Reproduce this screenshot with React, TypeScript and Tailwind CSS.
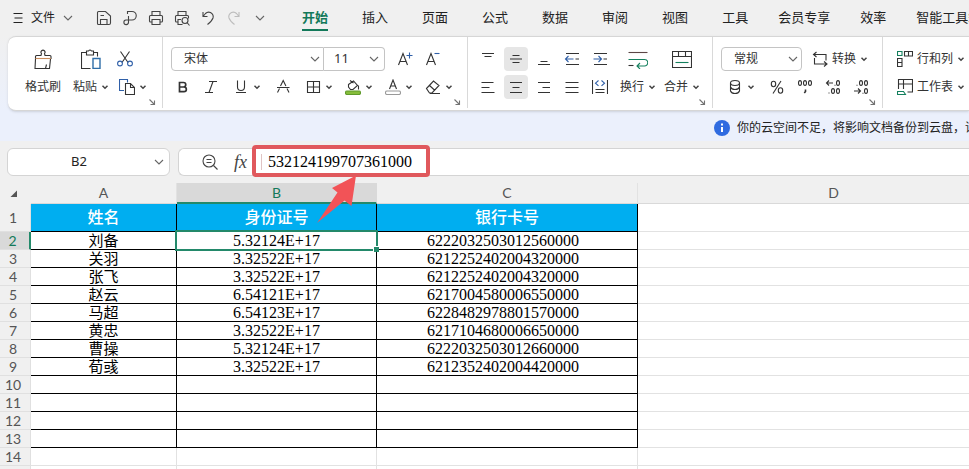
import type { ReactNode } from "react";
import clsx from "clsx";

type IconProps = {
  size?: number;
  children: ReactNode;
};

// All glyphs are drawn on a pixel grid: one unit is one pixel.
function Icon({ size = 16, children }: IconProps) {
  return (
    <svg
      width={size}
      height={size}
      viewBox={`0 0 ${size} ${size}`}
      fill="none"
      stroke="currentColor"
      strokeWidth="1.1"
      className="shrink-0"
      aria-hidden="true"
    >
      {children}
    </svg>
  );
}

function Caret() {
  return (
    <svg width="8" height="8" viewBox="0 0 8 8" fill="none" stroke="#444" strokeWidth="1.5" className="shrink-0" aria-hidden="true">
      <path d="M1.5 2.8 4 5.2l2.5-2.4" />
    </svg>
  );
}

function Chevron({ className }: { className?: string }) {
  return (
    <svg width="10" height="10" viewBox="0 0 10 10" fill="none" stroke="#666" strokeWidth="1.1" className={clsx("pointer-events-none shrink-0", className)} aria-hidden="true">
      <path d="M1 3l4 4 4-4" />
    </svg>
  );
}

function Launcher() {
  return (
    <button type="button" aria-label="更多设置" className="absolute right-1.5 bottom-0.5 text-neutral-500">
      <Icon size={8}>
        <path d="M1.5 1.5l5 5M6.5 2.5v4h-4" />
      </Icon>
    </button>
  );
}

type ToolProps = {
  label: string;
  caret?: boolean;
  active?: boolean;
  children: ReactNode;
};

function Tool({ label, caret, active, children }: ToolProps) {
  if (caret) {
    return (
      <button type="button" aria-label={label} className="flex h-7 w-10 items-center gap-1 pl-2">
        {children}
        <Caret />
      </button>
    );
  }
  return (
    <button type="button" aria-label={label} className="flex size-7 items-center justify-center">
      <span className={clsx("flex size-6 items-center justify-center rounded", active && "bg-[#e6e6e6]")}>{children}</span>
    </button>
  );
}

type BigToolProps = {
  label: string;
  caret?: boolean;
  children: ReactNode;
};

function BigTool({ label, caret, children }: BigToolProps) {
  return (
    <button type="button" className="flex w-11 flex-col items-center">
      <span className="flex h-7 items-center">{children}</span>
      <span className="flex h-7 items-center gap-1">
        {label}
        {caret && <Caret />}
      </span>
    </button>
  );
}

const quickAccess = [
  {
    label: "保存",
    icon: (
      <path d="M2.500 1.500h7l5 4.500v7q0 1.500-1.500 1.500h-10.500q-1 0-1-1v-11q0-1 1-1zM4.500 14.500v-5h6.500v5M4.500 5.500h3.500" />
    ),
  },
  {
    label: "输出为PDF",
    icon: <path d="M5.500 4v-2.500h4.500a4.200 4.200 0 0 1 0 8.500h-6a2.300 2.300 0 1 0 2.500 2.300v-6.300" />,
  },
  {
    label: "打印",
    icon: (
      <path d="M4 5.500v-4h8v4M4 12h-1.500q-1 0-1-1v-4.500q0-1 1-1h11q1 0 1 1v4.500q0 1-1 1h-1.500M4 9.500h8v5h-8z" />
    ),
  },
  {
    label: "打印预览",
    icon: (
      <>
        <path d="M4 5.500v-4h8v4M4 12h-1.500q-1 0-1-1v-4.500q0-1 1-1h11q1 0 1 1v2M7 9.500h-3v5h4.500" />
        <circle cx="11" cy="10.500" r="3" />
        <path d="M13 12.500l2.500 3" />
      </>
    ),
  },
  {
    label: "撤销",
    icon: <path d="M3 2v4.500h4.500M3 6.500l2.500-3q2-2 5-1 3.500 2 2.500 5.500-1 3-5.500 6.500" />,
  },
  {
    label: "恢复",
    faded: true,
    icon: <path d="M13 2v4.500h-4.500M13 6.500l-2.500-3q-2-2-5-1-3.500 2-2.500 5.500 1 3 5.500 6.500" />,
  },
];

const tabs = ["开始", "插入", "页面", "公式", "数据", "审阅", "视图", "工具"];
const extraTabs = ["会员专享", "效率", "智能工具箱"];

function TopBar() {
  return (
    <header className="flex h-9 items-center">
      <button type="button" className="flex items-center gap-2 pl-[13px] text-xs">
        <Icon size={10}>
          <path d="M0.500 0.500h9M1.500 5h8M0.500 9.500h9" />
        </Icon>
        文件
        <Chevron />
      </button>
      <span className="ml-3 h-4 w-px bg-[#d0d0d0]" />
      <div className="ml-1.5 flex">
        {quickAccess.map((item) => (
          <button
            key={item.label}
            type="button"
            aria-label={item.label}
            className={clsx("flex w-[26px] justify-center", item.faded ? "text-[#bdbdbd]" : "text-[#444]")}
          >
            <Icon>{item.icon}</Icon>
          </button>
        ))}
        <button type="button" aria-label="更多" className="flex w-[26px] items-center justify-center">
          <Chevron />
        </button>
      </div>
      <span className="ml-2 h-4 w-px bg-[#d0d0d0]" />
      <nav className="ml-[21px] flex gap-[34px] text-[13px]">
        {tabs.map((tab, i) => (
          <button key={tab} type="button" className={clsx("relative h-9", i === 0 && "font-bold text-[#13795a]")}>
            {tab}
            {i === 0 && <span className="absolute inset-x-0 bottom-[5px] h-0.5 bg-[#13795a]" />}
          </button>
        ))}
      </nav>
      <nav className="ml-[30px] flex gap-[30px] text-[13px]">
        {extraTabs.map((tab) => (
          <button key={tab} type="button">
            {tab}
          </button>
        ))}
      </nav>
    </header>
  );
}

function ClipboardGroup() {
  return (
    <section className="relative flex w-[154px] pt-2 pl-[13px]">
      <BigTool label="格式刷">
        <Icon size={20}>
          <path d="M2.500 10v-2.500q0-1 1-1h4.500l0.500-2a2 2 0 1 1 3 0l0.500 2h5q1 0 1 1v2.500M2.500 10l-0.500 9.500h14.500l1-9.500M12.500 19.500l1-4" />
          <path d="M2.500 9.500h15.500" stroke="#c98d5e" />
        </Icon>
      </BigTool>
      <div className="ml-1">
        <BigTool label="粘贴" caret>
          <Icon size={20}>
            <path d="M5 3.500h-4.500v16h9M13 3.500h3.500v4M5.500 2v4h7v-4h-2q-1.500-2-3 0z" />
            <path d="M12 9.500h7v10h-7z" stroke="#2f6ea8" strokeWidth="1.400" />
          </Icon>
        </BigTool>
      </div>
      <div className="-ml-0.5">
        <button type="button" aria-label="剪切" className="flex h-7 items-center pl-1.5">
          <Icon>
            <path d="M3.500 0.500l7.500 11M12.500 0.500l-7.500 11" />
            <circle cx="3" cy="12.500" r="2.400" stroke="#2f5fa8" />
            <circle cx="13" cy="12.500" r="2.400" stroke="#2f5fa8" />
          </Icon>
        </button>
        <Tool label="复制" caret>
          <Icon>
            <path d="M5 11.500h-4.500v-11h8v3" stroke="#2f5fa8" />
            <path d="M6.500 4.500h5l4 4v7h-9zM11.500 4.500v4h4" />
          </Icon>
        </Tool>
      </div>
      <Launcher />
    </section>
  );
}

function FontGroup() {
  return (
    <section className="relative w-[305px] border-l border-[#d9d9d9] pt-2 pl-1.5">
      <div className="flex h-7 items-center pl-0.5">
        <div className="relative h-6 w-[153px]">
          <select aria-label="字体" className="h-6 w-full appearance-none rounded-l border border-[#c4c4c4] bg-white pl-3 text-xs">
            <option>宋体</option>
          </select>
          <Chevron className="absolute top-[7px] right-1" />
        </div>
        <div className="relative h-6 w-[61px]">
          <select aria-label="字号" className="h-6 w-full appearance-none rounded-r border border-l-0 border-[#c4c4c4] bg-white pl-2.5 text-[13px]">
            <option>11</option>
          </select>
          <Chevron className="absolute top-[7px] right-1.5" />
        </div>
        <div className="ml-1.5 flex">
          <Tool label="增大字号">
            <Icon>
              <path d="M1.500 14l4.500-11.500 4.500 11.500M3 10.500h6" />
              <path d="M9.500 4.500h6M12.500 1.500v6" stroke="#2f5fa8" />
            </Icon>
          </Tool>
          <Tool label="减小字号">
            <Icon>
              <path d="M1.500 14l4.500-11.500 4.500 11.500M3 10.500h6" />
              <path d="M9.500 2.500h5" stroke="#2f5fa8" />
            </Icon>
          </Tool>
        </div>
      </div>
      <div className="flex">
        <Tool label="加粗">
          <Icon>
            <path d="M4.500 3.500h4a2.200 2.200 0 0 1 0 4.500h-4zM4.500 8h4.500a2.300 2.300 0 0 1 0 4.700h-4.500z" strokeWidth="1.700" />
          </Icon>
        </Tool>
        <Tool label="倾斜">
          <Icon>
            <path d="M6 2.500h8M2 13.500h8M10 2.500l-4 11" />
          </Icon>
        </Tool>
        <Tool label="下划线" caret>
          <Icon>
            <path d="M4.500 1.500v6.500a3.500 3.500 0 0 0 7 0v-6.500M3 13.500h10" />
          </Icon>
        </Tool>
        <div className="ml-1">
          <Tool label="删除线">
            <Icon>
              <path d="M2 8.500h12.500M5.500 7l2.700-5.500 2.700 5.500M4.500 9.500l-2 4M12 9.500l2 4" />
            </Icon>
          </Tool>
        </div>
        <Tool label="边框" caret>
          <Icon>
            <path d="M2.500 2.500h12v11h-12zM8.500 2.500v11M2.500 8h12" />
          </Icon>
        </Tool>
        <Tool label="填充颜色" caret>
          <Icon>
            <path d="M3.500 5.500l5-3.500 4 4.500-4.500 4h-2.500l-2-2.500zM5 1.500l3.500 2.500M13.500 6.500v4" />
            <rect x="0.500" y="12" width="15" height="3.500" rx="1.500" fill="#86bd3a" stroke="#5f9a2a" />
          </Icon>
        </Tool>
        <Tool label="字体颜色" caret>
          <Icon>
            <path d="M4.500 10l3.500-9 3.500 9M5.500 7h5" />
            <rect x="0.500" y="12" width="15" height="3.500" rx="1.500" stroke="#999" />
          </Icon>
        </Tool>
        <Tool label="清除" caret>
          <Icon>
            <path d="M1.500 9.500l7-7.500 5.500 4.500-7 7.500h-2.500zM4.500 6.500l5.500 5M5 14.500h10" />
          </Icon>
        </Tool>
      </div>
      <Launcher />
    </section>
  );
}

const alignTop = [
  { label: "顶端对齐", icon: <path d="M2 2.500h12M4.500 5.500h7" /> },
  { label: "垂直居中", active: true, icon: <path d="M4.500 4.500h7M2 8h12M4.500 11.500h7" /> },
  { label: "底端对齐", icon: <path d="M4.500 10.500h7M2 13.500h12" /> },
  {
    label: "减少缩进量",
    icon: (
      <>
        <path d="M2 2.500h13M2 13.500h13M11.500 8h3.500" />
        <path d="M9.500 8h-8M4.500 5l-3 3 3 3" stroke="#2f5fa8" />
      </>
    ),
  },
  {
    label: "增加缩进量",
    icon: (
      <>
        <path d="M2 2.500h13M2 13.500h13M11.500 8h3.500" />
        <path d="M1.500 8h8M6.500 5l3 3-3 3" stroke="#2f5fa8" />
      </>
    ),
  },
];

const alignBottom = [
  { label: "左对齐", icon: <path d="M1.500 3.500h12M1.500 8.500h8M1.500 13.500h13" /> },
  { label: "水平居中", active: true, icon: <path d="M2 3.500h12M4.500 8.500h7M2 13.500h12" /> },
  { label: "右对齐", icon: <path d="M2 3.500h12M6.500 8.500h7.500M2 13.500h12" /> },
  { label: "两端对齐", icon: <path d="M1.500 3.500h13M1.500 8.500h13M1.500 13.500h13" /> },
  {
    label: "分散对齐",
    icon: (
      <>
        <path d="M0.500 1v14M15.500 1v14M3.500 10.500h9M3.500 13.500h9" />
        <path d="M6.500 1.500l-3 2.700 3 2.700M9.500 1.500l3 2.700-3 2.700" stroke="#2f5fa8" />
      </>
    ),
  },
];

function AlignGroup() {
  return (
    <section className="relative flex w-[245px] border-l border-[#d9d9d9] pt-2 pl-1.5">
      <div>
        {[alignTop, alignBottom].map((row) => (
          <div key={row[0].label} className="flex">
            {row.map((item) => (
              <Tool key={item.label} label={item.label} active={item.active}>
                <Icon>{item.icon}</Icon>
              </Tool>
            ))}
          </div>
        ))}
      </div>
      <div className="ml-0.5 flex">
        <BigTool label="换行" caret>
          <Icon size={20}>
            <path d="M0.500 3.500h19" stroke="#5c4646" />
            <path d="M0.500 10.500h16a3 3 0 0 1 0 6.500h-7M12 14l-3 3 3 3" stroke="#14805e" />
            <path d="M0.500 16.500h5" />
          </Icon>
        </BigTool>
        <BigTool label="合并" caret>
          <Icon size={20}>
            <path d="M0.500 2.500h19v16h-19zM0.500 7.500h19M6.500 2.500v5M13.500 2.500v5" />
            <path d="M3.500 13.500h13" stroke="#14805e" />
          </Icon>
        </BigTool>
      </div>
      <Launcher />
    </section>
  );
}

function NumberGroup() {
  return (
    <section className="relative w-[170px] border-l border-[#d9d9d9] pt-2 pl-1.5">
      <div className="flex h-7 items-center pl-0.5">
        <div className="relative h-6 w-[81px]">
          <select aria-label="数字格式" className="h-6 w-full appearance-none rounded border border-[#c4c4c4] bg-white pl-3 text-xs">
            <option>常规</option>
          </select>
          <Chevron className="absolute top-[7px] right-1" />
        </div>
        <button type="button" className="ml-2.5 flex items-center gap-1">
          <Icon>
            <path d="M4.500 1l-3 2.500 3 2.500M1.500 3.500h12.500v6M2.500 7v6h12M12 10.500l3 2.500-3 2.500" />
          </Icon>
          转换
          <Caret />
        </button>
      </div>
      <div className="flex">
        <Tool label="货币" caret>
          <Icon>
            <ellipse cx="8" cy="4" rx="4.500" ry="2.500" />
            <path d="M3.500 4v8q1 2.500 4.500 2.500t4.500-2.500v-8M3.500 8q1 2.500 4.500 2.500t4.500-2.500" />
          </Icon>
        </Tool>
        <div className="ml-1 flex">
          <Tool label="百分比样式">
            <Icon>
              <ellipse cx="4.500" cy="5" rx="2.200" ry="2.700" />
              <ellipse cx="11.500" cy="11.500" rx="2.200" ry="2.700" />
              <path d="M12 2l-8 12.500" />
            </Icon>
          </Tool>
          <Tool label="千位分隔样式">
            <Icon>
              <ellipse cx="3" cy="4" rx="1.500" ry="2.400" />
              <ellipse cx="8" cy="4" rx="1.500" ry="2.400" />
              <ellipse cx="13" cy="4" rx="1.500" ry="2.400" />
              <path d="M8.500 10.500v2l-1.200 1.500" strokeWidth="1.600" />
            </Icon>
          </Tool>
          <Tool label="增加小数位数">
            <Icon>
              <ellipse cx="13" cy="4" rx="1.500" ry="2.400" />
              <path d="M8 4h-6.500M4 1.500l-2.500 2.500 2.500 2.500M9.500 6.200h1M3.500 14h1" />
              <ellipse cx="8" cy="12" rx="1.500" ry="2.400" />
              <ellipse cx="13" cy="12" rx="1.500" ry="2.400" />
            </Icon>
          </Tool>
          <Tool label="减少小数位数">
            <Icon>
              <ellipse cx="8" cy="4" rx="1.500" ry="2.400" />
              <ellipse cx="13" cy="4" rx="1.500" ry="2.400" />
              <path d="M3.500 6.200h1M1 12h6.500M5 9.500l2.500 2.500-2.500 2.500M9.500 14.200h1" />
              <ellipse cx="13" cy="12" rx="1.500" ry="2.400" />
            </Icon>
          </Tool>
        </div>
      </div>
      <Launcher />
    </section>
  );
}

function CellsGroup() {
  return (
    <section className="flex-1 border-l border-[#d9d9d9] pt-2 pl-3.5">
      <button type="button" className="flex h-7 items-center gap-1">
        <Icon>
          <path d="M0.500 0.500h4.500v4h-4.500z" stroke="#14805e" />
          <path d="M7.500 0.500h8v4.500h-8zM11.500 0.500v4.500M0.500 7.500h4.500v8h-4.500zM0.500 11.500h4.500" />
        </Icon>
        行和列
        <Caret />
      </button>
      <button type="button" className="flex h-7 items-center gap-1">
        <Icon>
          <path d="M1.500 10v-9.500h14v12.500h-5M1.500 5h14M6.500 0.500v9.500" />
          <path d="M0.500 15.500v-3h6l2 3z" stroke="#14805e" />
        </Icon>
        工作表
        <Caret />
      </button>
    </section>
  );
}

function Notice() {
  return (
    <div className="flex h-[30px] items-center gap-[7px] pt-1 pl-[714px] text-xs">
      <svg width="16" height="16" viewBox="0 0 16 16" className="shrink-0" aria-hidden="true">
        <circle cx="8" cy="8" r="8" fill="#2f6be0" />
        <path d="M8 7v5M8 3.500v2" stroke="#fff" strokeWidth="2" />
      </svg>
      <p>你的云空间不足，将影响文档备份到云盘，请及时清理</p>
    </div>
  );
}

function FormulaBar() {
  return (
    <div className="flex h-[42px] items-center gap-2 pl-[7px]">
      <div className="flex h-7 w-[163px] shrink-0 items-center rounded-md border border-[#d4d4d4] bg-white">
        <input aria-label="名称框" defaultValue="B2" className="w-[142px] text-center text-[13px] outline-none" />
        <Chevron className="ml-1" />
      </div>
      <div className="relative flex h-7 flex-1 items-center rounded-l-md border border-r-0 border-[#d4d4d4] bg-white pl-[23px] text-[#444]">
        <Icon>
          <circle cx="7" cy="7" r="6" />
          <path d="M4.500 5.500h5M4.500 8.500h5M11.500 11.500l4 4" />
        </Icon>
        <span className="ml-4 font-['Liberation_Serif',serif] text-lg leading-5 italic">fx</span>
        <span className="ml-3.5 h-4 w-px bg-[#e0c4c4]" />
        <input
          aria-label="编辑栏"
          defaultValue="532124199707361000"
          className="ml-1.5 flex-1 font-['Liberation_Serif','Noto_Sans_CJK_SC',serif] text-base leading-5 text-black outline-none"
        />
        {/* marker around the formula value, with an arrow coming from the selected cell */}
        <div className="pointer-events-none absolute -top-1 left-[73px] h-8 w-[178px] rounded-sm border-4 border-[#e0585c]" />
        <svg width="44" height="50" viewBox="0 0 44 50" className="pointer-events-none absolute top-[26px] left-[137px] z-10" aria-hidden="true">
          <path d="M40 0.500 16 13l5.500 4.500L1 48l27.500-22.500 7 5.500z" fill="#f25357" />
        </svg>
      </div>
    </div>
  );
}

const people = [
  ["刘备", "5.32124E+17", "6222032503012560000"],
  ["关羽", "3.32522E+17", "6212252402004320000"],
  ["张飞", "3.32522E+17", "6212252402004320000"],
  ["赵云", "6.54121E+17", "6217004580006550000"],
  ["马超", "6.54123E+17", "6228482978801570000"],
  ["黄忠", "3.32522E+17", "6217104680006650000"],
  ["曹操", "5.32124E+17", "6222032503012660000"],
  ["荀彧", "3.32522E+17", "6212352402004420000"],
];

const titles = ["姓名", "身份证号", "银行卡号"];
const columns = ["A", "B", "C", "D"];
const bodyRows = Array.from({ length: 14 }, (_, i) => i + 2);

function Sheet() {
  return (
    <table className="w-[1030px] table-fixed border-separate border-spacing-0 bg-white text-center">
      <colgroup>
        <col className="w-[31px]" />
        <col className="w-[146px]" />
        <col className="w-[200px]" />
        <col className="w-[261px]" />
        <col />
      </colgroup>
      <thead className="font-['Lato',sans-serif] text-sm leading-4 text-[#555]">
        <tr className="bg-[#f0f0f0]">
          <td className="h-[21px] p-0">
            <svg width="8" height="8" viewBox="0 0 8 8" className="ml-[10px]" aria-hidden="true">
              <path d="M7 0.500v6.500H0.500z" fill="#555" />
            </svg>
          </td>
          {columns.map((name) => (
            <th
              key={name}
              scope="col"
              className={clsx(
                "h-[21px] border-r p-0 font-normal",
                name === "B"
                  ? "border-r-[#d9d9d9] border-b-2 border-b-[#23896a] bg-[#d9d9d9] text-[#13795a]"
                  : "border-r-[#e2e2e2] border-b border-b-[#d9d9d9]",
              )}
            >
              {name}
            </th>
          ))}
        </tr>
      </thead>
      <tbody className="font-['Liberation_Serif','Noto_Sans_CJK_SC',serif] text-base leading-4 text-black">
        <tr>
          <th scope="row" className="h-7 border-r border-b border-[#e0e0e0] bg-[#f0f0f0] p-0 pr-1 font-['Lato',sans-serif] text-sm leading-4 font-normal text-[#555]">
            1
          </th>
          {titles.map((title) => (
            <td key={title} className="border-r border-b border-black bg-[#00aef0] p-0 font-medium text-white">
              {title}
            </td>
          ))}
          <td className="border-b border-[#e2e2e2] p-0" />
        </tr>
        {bodyRows.map((row) => (
          <tr key={row}>
            <th
              scope="row"
              className={clsx(
                "h-[18px] border-r border-b p-0 pr-1 font-['Lato',sans-serif] text-sm leading-4 font-normal",
                row === 2
                  ? "border-r-2 border-r-[#23896a] border-b-[#e0e0e0] bg-[#d9d9d9] text-[#13795a]"
                  : "border-[#e0e0e0] bg-[#f0f0f0] text-[#555]",
              )}
            >
              {row}
            </th>
            {titles.map((title, col) => (
              <td
                key={title}
                className={clsx(
                  "relative border-r border-b p-0",
                  row < 14 ? "border-black" : "border-[#e2e2e2]",
                  col === 0 && "text-[15px]",
                  col === 2 && "pr-2",
                )}
              >
                {people[row - 2]?.[col]}
                {row === 2 && col === 1 && (
                  <span className="absolute -inset-x-0.5 -top-0.5 -bottom-0.5 z-10 border-2 border-[#23896a]">
                    <span className="absolute -right-[3px] -bottom-[3px] size-1.5 border-t border-l border-white bg-[#23896a]" />
                  </span>
                )}
              </td>
            ))}
            <td className="border-b border-[#e2e2e2] p-0" />
          </tr>
        ))}
      </tbody>
    </table>
  );
}

export default function App() {
  return (
    <div className="h-screen overflow-hidden bg-[#f0f0f0] font-['Noto_Sans','Noto_Sans_CJK_SC',sans-serif] whitespace-nowrap text-[#222]">
      <TopBar />
      <div className="bg-[#ebf0fc]">
        <div className="bg-linear-to-b from-[#f0f0f0] to-[#ebf0fc] pl-2">
          <div className="flex h-[75px] rounded-l-lg border-y border-[#d6d6d6] bg-white pb-0.5 text-xs text-[#333] shadow-sm">
            <ClipboardGroup />
            <FontGroup />
            <AlignGroup />
            <NumberGroup />
            <CellsGroup />
          </div>
        </div>
        <Notice />
      </div>
      <FormulaBar />
      <Sheet />
    </div>
  );
}
